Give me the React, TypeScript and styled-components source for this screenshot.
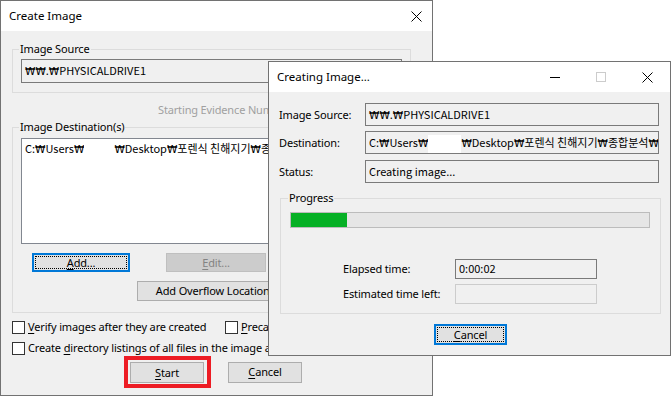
import React from "react";
import styled, { createGlobalStyle } from "styled-components";

const GlobalStyle = createGlobalStyle`
    html, body {
        margin: 0;
        padding: 0;
        background: #ffffff;
    }
    body {
        width: 672px;
        height: 396px;
        overflow: hidden;
        font-family: "Noto Sans", "Noto Sans CJK KR", sans-serif;
        font-size: 11px;
        letter-spacing: -0.15px;
        line-height: 16px;
        color: #000000;
    }
`;

const Desktop = styled.div`
    position: relative;
    width: 672px;
    height: 396px;
    overflow: hidden;
    background: #ffffff;
`;

const Window = styled.div<{ $left: number; $top: number; $w: number; $h: number }>`
    position: absolute;
    left: ${(p) => p.$left}px;
    top: ${(p) => p.$top}px;
    width: ${(p) => p.$w}px;
    height: ${(p) => p.$h}px;
    box-sizing: border-box;
    border: 1px solid #727272;
    background: #f0f0f0;
    display: flex;
    flex-direction: column;
    overflow: hidden;
`;

const TitleBar = styled.div<{ $h: number }>`
    height: ${(p) => p.$h}px;
    flex: none;
    background: #ffffff;
    display: flex;
    align-items: center;
    padding-left: 8px;
`;

const Title = styled.div`
    flex: 1;
    font-size: 11.5px;
    letter-spacing: 0;
    white-space: nowrap;
`;

const CaptionButton = styled.div<{ $w: number }>`
    width: ${(p) => p.$w}px;
    height: 100%;
    display: flex;
    align-items: center;
    justify-content: center;
`;

const Body = styled.div<{ $pad: string }>`
    flex: 1;
    padding: ${(p) => p.$pad};
    display: flex;
    flex-direction: column;
    align-items: flex-start;
`;

const Group = styled.fieldset<{ $w: number; $pad: string; $mt: number; $ml?: number }>`
    box-sizing: border-box;
    width: ${(p) => p.$w}px;
    margin: ${(p) => p.$mt}px 0 0 ${(p) => p.$ml ?? 0}px;
    padding: ${(p) => p.$pad};
    border: 1px solid #dcdcdc;
    min-width: 0;
`;

const Legend = styled.legend`
    padding: 0 1px;
    margin-left: -2px;
    line-height: 16px;
`;

const TextBox = styled.div<{ $w: number; $h: number; $disabled?: boolean }>`
    box-sizing: border-box;
    width: ${(p) => p.$w}px;
    height: ${(p) => p.$h}px;
    flex: none;
    border: 1px solid ${(p) => (p.$disabled ? "#cccccc" : "#7a7a7a")};
    background: #f0f0f0;
    padding: 0 3px;
    font-family: "Noto Sans CJK KR", "Noto Sans", sans-serif;
    font-size: 11px;
    letter-spacing: 0;
    line-height: ${(p) => p.$h - 3}px;
    white-space: nowrap;
    overflow: hidden;
`;

const Sep = styled.span`
    font-family: "DejaVu Sans", sans-serif;
    font-size: 10.5px;
`;

const Redacted = styled.span<{ $w: number }>`
    display: inline-block;
    vertical-align: middle;
    width: ${(p) => p.$w}px;
    height: 18px;
    background: #ffffff;
`;

const ListBox = styled.div`
    box-sizing: border-box;
    width: 381px;
    height: 106px;
    border: 1px solid #828790;
    background: #ffffff;
    padding: 1px 3px;
    font-family: "Noto Sans CJK KR", "Noto Sans", sans-serif;
    font-size: 11px;
    letter-spacing: 0;
    white-space: nowrap;
    overflow: hidden;
    line-height: 16px;
`;

const DimText = styled.div`
    margin: 9px 0 0 146px;
    color: #a0a0a0;
    white-space: nowrap;
`;

const Row = styled.div<{ $mt: number; $ml?: number; $gap?: number }>`
    display: flex;
    align-items: center;
    margin-top: ${(p) => p.$mt}px;
    margin-left: ${(p) => p.$ml ?? 0}px;
    gap: ${(p) => p.$gap ?? 0}px;
`;

const Button = styled.div<{ $w: number; $h: number; $focus?: boolean; $disabled?: boolean }>`
    box-sizing: border-box;
    width: ${(p) => p.$w}px;
    height: ${(p) => p.$h}px;
    flex: none;
    display: flex;
    align-items: center;
    justify-content: center;
    white-space: nowrap;
    background: ${(p) => (p.$disabled ? "#cccccc" : "#e1e1e1")};
    color: ${(p) => (p.$disabled ? "#838383" : "#000000")};
    border: ${(p) =>
        p.$focus ? "2px solid #0078d7" : p.$disabled ? "1px solid #bfbfbf" : "1px solid #adadad"};
    position: relative;
    &::after {
        content: "";
        display: ${(p) => (p.$focus ? "block" : "none")};
        position: absolute;
        inset: 1px;
        border: 1px dotted #000000;
    }
`;

const Key = styled.span`
    text-decoration: underline;
    text-underline-offset: 2px;
`;

const Highlight = styled.div`
    border: 4px solid #ed1c24;
    padding: 2px 3px 1px 2px;
    background: #f0f0f0;
`;

const Check = styled.label<{ $w?: number }>`
    display: flex;
    align-items: center;
    gap: 3px;
    width: ${(p) => (p.$w ? `${p.$w}px` : "auto")};
    white-space: nowrap;
`;

const Box = styled.span`
    box-sizing: border-box;
    width: 13px;
    height: 13px;
    border: 1px solid #333333;
    background: #ffffff;
    flex: none;
`;

const FieldRow = styled.div<{ $mt: number; $labelW: number }>`
    display: flex;
    align-items: center;
    margin-top: ${(p) => p.$mt}px;
    & > span:first-child {
        width: ${(p) => p.$labelW}px;
        flex: none;
        white-space: nowrap;
    }
`;

const Progress = styled.div`
    box-sizing: border-box;
    width: 360px;
    height: 16px;
    border: 1px solid #bcbcbc;
    background: #e6e6e6;
`;

const ProgressFill = styled.div`
    height: 100%;
    background: #06b025;
`;

const Indent = styled.div`
    margin-left: 53px;
`;

const CloseIcon = () => (
    <svg width="11" height="11" viewBox="0 0 11 11">
        <path d="M0.5 0.5 L10.5 10.5 M10.5 0.5 L0.5 10.5" stroke="#000" strokeWidth="1" fill="none" />
    </svg>
);

// korean windows shows the path separator as a won sign
const Path = ({ text }: { text: string }) => (
    <>
        {text.split("₩").map((part, i) => (
            <React.Fragment key={i}>
                {i > 0 && <Sep>₩</Sep>}
                {part}
            </React.Fragment>
        ))}
    </>
);

export default function App() {
    const progress = 56 / 358;
    return (
        <Desktop>
            <GlobalStyle />
            <Window $left={0} $top={0} $w={433} $h={396}>
                <TitleBar $h={30}>
                    <Title>Create Image</Title>
                    <CaptionButton $w={31}>
                        <CloseIcon />
                    </CaptionButton>
                </TitleBar>
                <Body $pad="0 0 0 11px">
                    <Group $w={399} $mt={10} $pad="2px 8px 9px 8px">
                        <Legend>Image Source</Legend>
                        <TextBox $w={381} $h={24}>
                            <Path text="₩₩.₩PHYSICALDRIVE1" />
                        </TextBox>
                    </Group>
                    <DimText>Starting Evidence Number:</DimText>
                    <Group $w={399} $mt={1} $pad="3px 8px 11px 8px">
                        <Legend>Image Destination(s)</Legend>
                        <ListBox>
                            <Path text="C:₩Users₩" />
                            <Redacted $w={30} />
                            <Path text="₩Desktop₩포렌식 친해지기₩종합분석₩image" />
                        </ListBox>
                        <Row $mt={9} $ml={11} $gap={36}>
                            <Button $w={98} $h={19} $focus>
                                <span>
                                    <Key>A</Key>dd...
                                </span>
                            </Button>
                            <Button $w={100} $h={19} $disabled>
                                <span>
                                    <Key>E</Key>dit...
                                </span>
                            </Button>
                        </Row>
                        <Row $mt={9} $ml={116}>
                            <Button $w={160} $h={20}>
                                Add Overflow Location...
                            </Button>
                        </Row>
                    </Group>
                    <Row $mt={6}>
                        <Check $w={213}>
                            <Box />
                            <span>
                                <Key>V</Key>erify images after they are created
                            </span>
                        </Check>
                        <Check>
                            <Box />
                            <span>
                                <Key>P</Key>recalculate Progress Statistics
                            </span>
                        </Check>
                    </Row>
                    <Row $mt={5}>
                        <Check>
                            <Box />
                            <span>
                                Create <Key>d</Key>irectory listings of all files in the image after they are created
                            </span>
                        </Check>
                    </Row>
                    <Row $mt={0} $ml={112} $gap={17}>
                        <Highlight>
                            <Button $w={74} $h={21}>
                                <span>
                                    <Key>S</Key>tart
                                </span>
                            </Button>
                        </Highlight>
                        <Button $w={74} $h={21}>
                            <span>
                                <Key>C</Key>ancel
                            </span>
                        </Button>
                    </Row>
                </Body>
            </Window>

            <Window $left={268} $top={61} $w={403} $h={295}>
                <TitleBar $h={30}>
                    <Title>Creating Image...</Title>
                    <CaptionButton $w={46}>
                        <svg width="10" height="10" viewBox="0 0 10 10">
                            <path d="M0 5.5 H10" stroke="#000" strokeWidth="1" />
                        </svg>
                    </CaptionButton>
                    <CaptionButton $w={46}>
                        <svg width="10" height="10" viewBox="0 0 10 10">
                            <rect x="0.5" y="0.5" width="9" height="9" stroke="#cccccc" fill="none" />
                        </svg>
                    </CaptionButton>
                    <CaptionButton $w={46}>
                        <CloseIcon />
                    </CaptionButton>
                </TitleBar>
                <Body $pad="11px 10px 0 10px">
                    <FieldRow $mt={0} $labelW={86}>
                        <span>Image Source:</span>
                        <TextBox $w={294} $h={23}>
                            <Path text="₩₩.₩PHYSICALDRIVE1" />
                        </TextBox>
                    </FieldRow>
                    <FieldRow $mt={5} $labelW={86}>
                        <span>Destination:</span>
                        <TextBox $w={294} $h={23}>
                            <Path text="C:₩Users₩" />
                            <Redacted $w={33} />
                            <Path text="₩Desktop₩포렌식 친해지기₩종합분석₩image" />
                        </TextBox>
                    </FieldRow>
                    <FieldRow $mt={6} $labelW={86}>
                        <span>Status:</span>
                        <TextBox $w={294} $h={23}>Creating image...</TextBox>
                    </FieldRow>
                    <Group $w={381} $mt={7} $ml={1} $pad="6px 9px 9px 9px">
                        <Legend>Progress</Legend>
                        <Progress>
                            <ProgressFill style={{ width: `${progress * 100}%` }} />
                        </Progress>
                        <Indent>
                            <FieldRow $mt={31} $labelW={112}>
                                <span>Elapsed time:</span>
                                <TextBox $w={142} $h={20}>0:00:02</TextBox>
                            </FieldRow>
                            <FieldRow $mt={5} $labelW={112}>
                                <span>Estimated time left:</span>
                                <TextBox $w={142} $h={20} $disabled />
                            </FieldRow>
                        </Indent>
                    </Group>
                    <Row $mt={10} $ml={155}>
                        <Button $w={73} $h={21} $focus>
                            <span>
                                <Key>C</Key>ancel
                            </span>
                        </Button>
                    </Row>
                </Body>
            </Window>
        </Desktop>
    );
}
